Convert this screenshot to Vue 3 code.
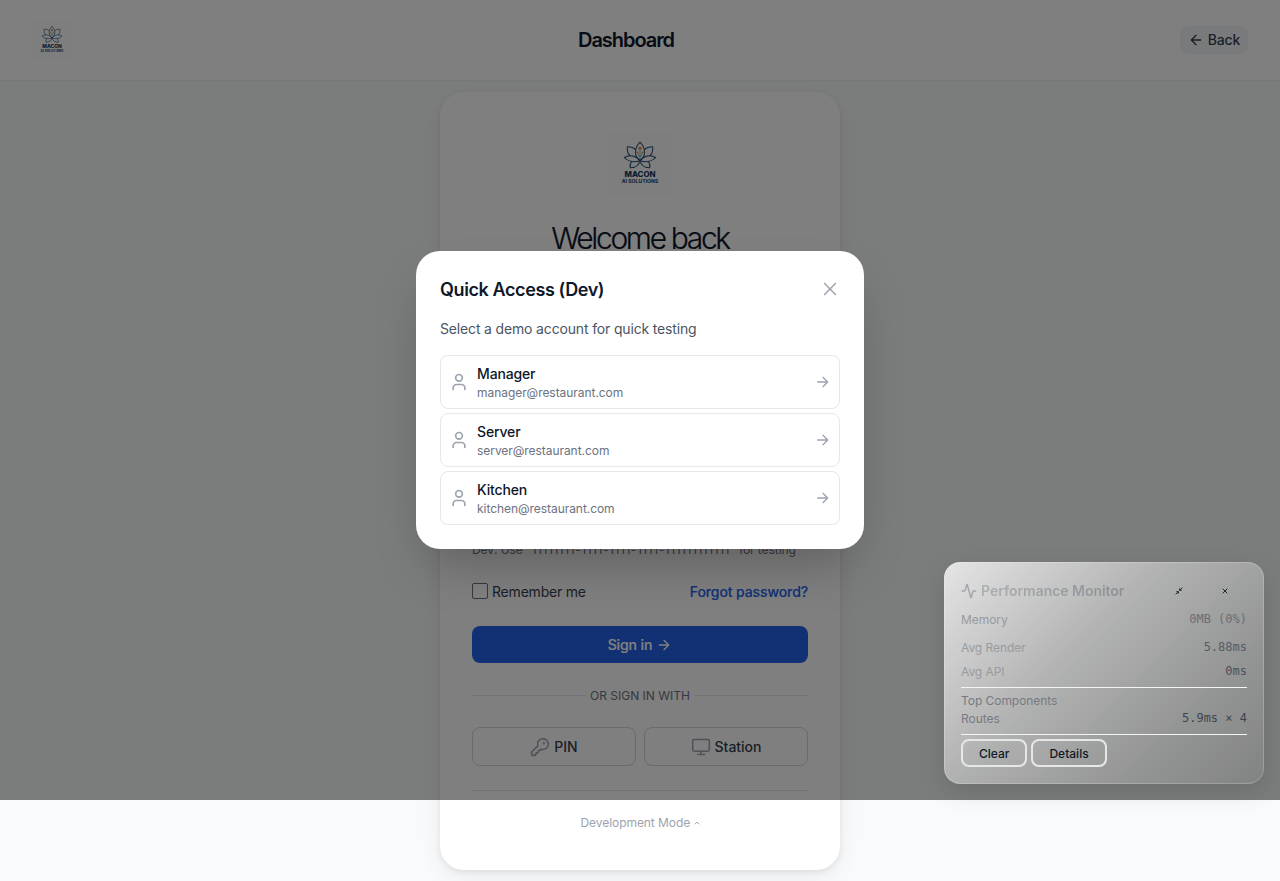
<script setup>
const accounts = [
  { name: 'Manager', email: 'manager@restaurant.com' },
  { name: 'Server', email: 'server@restaurant.com' },
  { name: 'Kitchen', email: 'kitchen@restaurant.com' },
]
const petals = [
  'M32 10.200C28.500 13.500 27.500 17.500 27.500 20C27.500 24 29.500 27 32 28.500C34.500 27 36.500 24 36.500 20C36.500 17.500 35.500 13.500 32 10.200Z',
  'M27.600 17.500C25.500 15.500 22.500 14.500 19.300 14.700C19 18.500 20 22 22.300 24M36.400 17.500C38.500 15.500 41.500 14.500 44.700 14.700C45 18.500 44 22 41.700 24',
  'M32 28.500C28 23.500 21.500 22.500 16.300 25.500C20 29.800 27 31 32 28.500C36 23.500 42.500 22.500 47.700 25.500C44 29.800 37 31 32 28.500Z',
  'M23.800 29.500C22 31.300 21.800 33.500 22.300 35.700C27 35.800 31 33.500 32 28.500C33 33.500 37 35.800 41.700 35.700C42.200 33.500 42 31.300 40.200 29.500',
]
</script>

<template>
  <div class="page">
    <header class="topbar">
      <div class="side">
        <svg class="logo small" viewBox="0 0 64 64">
          <g class="petals"><path v-for="d in petals" :key="d" :d="d" /></g>
          <path class="stem" d="M32 18V27M29.500 21.500L32 25L34.500 21.500" />
          <circle class="bud" cx="32" cy="16.200" r="1.700" /><circle class="bud" cx="29.600" cy="20.500" r="1" /><circle class="bud" cx="34.400" cy="20.500" r="1" />
          <text x="32" y="45" class="brand" textLength="31" lengthAdjust="spacingAndGlyphs">MACON</text>
          <text x="32" y="51" class="tag" textLength="36.500" lengthAdjust="spacingAndGlyphs">AI SOLUTIONS</text>
        </svg>
      </div>
      <h1>Dashboard</h1>
      <div class="side end">
        <button class="back">
          <svg class="ico" viewBox="0 0 24 24" width="16" height="16"><path d="M12 19l-7-7 7-7M19 12H5" /></svg>
          <span>Back</span>
        </button>
      </div>
    </header>

    <main>
      <section class="card">
        <svg class="logo" viewBox="0 0 64 64">
          <g class="petals"><path v-for="d in petals" :key="d" :d="d" /></g>
          <path class="stem" d="M32 18V27M29.500 21.500L32 25L34.500 21.500" />
          <circle class="bud" cx="32" cy="16.200" r="1.700" /><circle class="bud" cx="29.600" cy="20.500" r="1" /><circle class="bud" cx="34.400" cy="20.500" r="1" />
          <text x="32" y="45" class="brand" textLength="31" lengthAdjust="spacingAndGlyphs">MACON</text>
          <text x="32" y="51" class="tag" textLength="36.500" lengthAdjust="spacingAndGlyphs">AI SOLUTIONS</text>
        </svg>
        <h2>Welcome back</h2>
        <p class="hint">Dev: Use "<span class="digits">11111111-1111-1111-1111-111111111111</span>" for testing</p>
        <div class="options">
          <label><span class="box"></span><span class="label-text">Remember me</span></label>
          <a>Forgot password?</a>
        </div>
        <button class="signin">
          Sign in
          <svg class="ico" viewBox="0 0 24 24" width="16" height="16"><path d="M12 5l7 7-7 7M5 12h14" /></svg>
        </button>
        <div class="divider"><i></i><span>OR SIGN IN WITH</span><i></i></div>
        <div class="alts">
          <button>
            <svg class="ico" viewBox="0 0 24 24" width="20" height="20"><path d="M2.600 17.400A2 2 0 0 0 2 18.800V21a1 1 0 0 0 1 1h3a1 1 0 0 0 1-1v-1a1 1 0 0 1 1-1h1a1 1 0 0 0 1-1v-1a1 1 0 0 1 1-1h.2a2 2 0 0 0 1.400-.6l.8-.8a6.500 6.500 0 1 0-4-4z" /><circle cx="16.500" cy="7.500" r=".5" /></svg>
            PIN
          </button>
          <button>
            <svg class="ico" viewBox="0 0 24 24" width="20" height="20"><rect x="2" y="3" width="20" height="14" rx="2" /><path d="M8 21h8M12 17v4" /></svg>
            Station
          </button>
        </div>
        <div class="rule"></div>
        <div class="devmode">Development Mode <svg class="caret" viewBox="0 0 6 4" width="6" height="4"><path d="M.8 3.300L3 1.100l2.200 2.200" /></svg></div>
      </section>
    </main>

    <div class="overlay">
      <div class="modal">
        <div class="modal-head">
          <h3>Quick Access (Dev)</h3>
          <svg class="ico" viewBox="0 0 24 24" width="20" height="20"><path d="M18.500 5.500l-13 13M5.500 5.500l13 13" /></svg>
        </div>
        <p>Select a demo account for quick testing</p>
        <div class="accounts">
          <div v-for="a in accounts" :key="a.name" class="account">
            <svg class="ico" viewBox="0 0 24 24" width="20" height="20"><path d="M19 21v-2a4 4 0 0 0-4-4H9a4 4 0 0 0-4 4v2" /><circle cx="12" cy="7" r="4" /></svg>
            <div class="who"><b>{{ a.name }}</b><span>{{ a.email }}</span></div>
            <svg class="ico" viewBox="0 0 24 24" width="16" height="16"><path d="M12 5l7 7-7 7M4 12h15" /></svg>
          </div>
        </div>
      </div>
    </div>

    <aside class="perf">
      <div class="perf-head">
        <svg class="ico" viewBox="0 0 24 24" width="16" height="16"><path d="M22 12h-2.480a2 2 0 0 0-1.930 1.460l-2.350 8.360a.25.25 0 0 1-.48 0L9.240 2.180a.25.25 0 0 0-.48 0l-2.350 8.360A2 2 0 0 1 4.490 12H2" /></svg>
        <strong>Performance Monitor</strong>
        <svg class="mini shrink" viewBox="0 0 24 24" width="8" height="8"><path d="M4 14h6v6M20 10h-6V4M14 10l8-8M2 22l8-8" /></svg>
        <svg class="mini close" viewBox="0 0 24 24" width="8" height="8"><path d="M19 5L5 19M5 5l14 14" /></svg>
      </div>
      <div class="row first"><span>Memory</span><code>0MB (0%)</code></div>
      <div class="row second"><span>Avg Render</span><code>5.88ms</code></div>
      <div class="row third"><span>Avg API</span><code>0ms</code></div>
      <div class="line"></div>
      <div class="row top"><span>Top Components</span></div>
      <div class="row last"><span>Routes</span><code>5.9ms × 4</code></div>
      <div class="line"></div>
      <div class="acts"><button>Clear</button><button>Details</button></div>
    </aside>
  </div>
</template>

<style>
body { background: #f9fafb; }
</style>

<style scoped>
.page { position: relative; height: 881px; overflow: hidden; font-family: Inter, "Liberation Sans", sans-serif; color: #0f172a; background: linear-gradient(#f7fbf8 0 800px, #f9fafc 800px); }
.page * { box-sizing: border-box; }
h1, h2, h3, p { margin: 0; }
button { font: inherit; color: inherit; background: none; border: 0; padding: 0; display: flex; align-items: center; justify-content: center; }
.ico { fill: none; stroke: currentColor; stroke-width: 2; stroke-linecap: round; stroke-linejoin: round; flex: none; }
.topbar { height: 80px; padding: 0 32px; display: flex; align-items: center; justify-content: space-between; background: #fff; box-shadow: 0 1px 2px rgba(0,0,0,.06); }
.side { width: 40px; display: flex; }
.end { width: 68px; justify-content: flex-end; }
h1 { font-size: 20px; line-height: 28px; font-weight: 600; letter-spacing: -1.050px; }
.back { width: 68px; height: 28px; border-radius: 8px; background: #f3f4f6; font-size: 14px; line-height: 20px; font-weight: 500; color: #374151; gap: 4px; letter-spacing: -.1px; }
.back span { padding-bottom: 1px; }
.logo { display: block; width: 64px; height: 64px; background: #fdfdfd; }
.logo.small { width: 40px; height: 40px; }
.petals path { fill: none; stroke: #294b70; stroke-width: 1.050; stroke-linejoin: round; }
.stem { fill: none; stroke: #58aaa4; stroke-width: .8; }
.bud { fill: #f08a4b; }
.brand { font: 800 7px Inter, sans-serif; text-anchor: middle; fill: #163a5f; }
.tag { font: 700 4.600px Inter, sans-serif; text-anchor: middle; fill: #163a5f; }
main { display: flex; justify-content: center; padding-top: 12px; }
.card { width: 400px; height: 778px; border-radius: 24px; background: #fff; padding: 40px 32px 0; box-shadow: 0 8px 24px rgba(0,0,0,.06), 0 2px 6px rgba(0,0,0,.08); display: flex; flex-direction: column; }
.card .logo { align-self: center; }
h2 { margin-top: 23px; height: 38px; text-align: center; font-size: 30px; line-height: 38px; font-weight: 300; letter-spacing: -2.350px; -webkit-text-stroke: .2px currentColor; }
.hint { margin-top: 285px; font-size: 12px; line-height: 16px; color: #6b7280; white-space: nowrap; letter-spacing: -.06px; }
.digits { letter-spacing: .56px; }
.options { margin-top: 23px; height: 20px; display: flex; justify-content: space-between; align-items: center; font-size: 14px; color: #374151; letter-spacing: -.14px; }
.options label { display: flex; align-items: center; gap: 4px; letter-spacing: -.2px; }
.box { width: 16px; height: 16px; border: 1px solid #6b7280; border-radius: 2px; }
.options a { color: #2563eb; font-weight: 500; letter-spacing: -.1px; -webkit-text-stroke: .15px currentColor; }
.signin { margin-top: 25px; height: 37px; border-radius: 8px; background: #2563eb; color: #fff; font-size: 14px; font-weight: 500; gap: 4px; letter-spacing: -.1px; -webkit-text-stroke: .15px currentColor; }
.divider { margin-top: 24px; height: 16px; display: flex; align-items: center; gap: 4px; font-size: 12px; color: #6b7280; }
.divider i { flex: 1; height: 1px; background: #e5e7eb; }
.alts { display: flex; gap: 8px; margin-top: 24px; }
.alts button { flex: 1; height: 39px; border: 1px solid #d1d5db; border-radius: 8px; font-size: 14px; font-weight: 500; color: #374151; gap: 4px; }
.alts .ico { color: #9ca3af; stroke-width: 1.900; }
.rule { margin-top: 24px; height: 1px; background: #e5e7eb; }
.devmode { margin-top: 24px; font-size: 12px; line-height: 16px; color: #9ca3af; text-align: center; letter-spacing: -.06px; }
.caret { fill: none; stroke: currentColor; vertical-align: 2px; }
.overlay { position: absolute; inset: 0 0 auto; height: 800px; background: rgba(0,0,0,.5); display: flex; align-items: center; justify-content: center; }
.modal { width: 448px; height: 298px; border-radius: 24px; background: #fff; padding: 24px; box-shadow: 0 25px 50px -12px rgba(0,0,0,.25); }
.modal-head { height: 28px; display: flex; align-items: center; justify-content: space-between; }
.modal-head .ico { color: #9ca3af; stroke-width: 1.800; }
h3 { font-size: 18px; line-height: 28px; font-weight: 600; letter-spacing: -.39px; padding-top: 2px; }
.modal p { margin-top: 16px; font-size: 14px; line-height: 20px; color: #4b5563; letter-spacing: -.16px; }
.accounts { margin-top: 16px; display: grid; gap: 4px; }
.account { height: 54px; border: 1px solid #e5e7eb; border-radius: 8px; padding: 0 8px; display: flex; align-items: center; }
.account .ico { color: #9ca3af; }
.who { flex: 1; margin-left: 8px; display: flex; flex-direction: column; padding-top: 1px; }
.who b { font-size: 14px; line-height: 20px; font-weight: 500; letter-spacing: -.15px; }
.who span { font-size: 12px; line-height: 17px; color: #6b7280; letter-spacing: -.05px; }
.perf { position: absolute; left: 944px; top: 562px; width: 320px; height: 222px; padding: 16px; border: 1px solid rgba(255,255,255,.2); border-radius: 16px; background: linear-gradient(135deg, rgba(255,255,255,.8), rgba(255,255,255,.42) 40%, rgba(255,255,255,.2) 72%, rgba(255,255,255,.05)) border-box; box-shadow: 0 8px 24px rgba(0,0,0,.12); color: #6b7280; }
.perf-head { height: 24px; display: flex; align-items: center; font-size: 14px; color: #a1a4aa; }
.perf-head strong { font-weight: 600; margin-left: 4px; flex: 1; letter-spacing: -.04px; padding-bottom: 1px; background: linear-gradient(90deg, #acaeb2, #8b8e94 145px); background-clip: text; color: transparent; }
.mini { fill: none; stroke: #1f2937; stroke-width: 3; }
.shrink { margin-right: 38px; }
.close { margin-right: 18px; }
.row { display: flex; justify-content: space-between; font-size: 12px; line-height: 16px; height: 16px; letter-spacing: -.05px; }
.row code { font: 12px/16px "DejaVu Sans Mono", monospace; letter-spacing: 0; color: #4b4f5c; }
.row span { color: #8b8e95; }
.first { margin-top: 9px; }
.first span, .second span, .third span { color: #989ba0; }
.first code { color: #696d77; line-height: 14px; }
.third code { line-height: 14px; }
.second code, .last code { line-height: 15px; }
.second code { color: #565a66; }
.second { margin-top: 12px; }
.third { margin-top: 8px; margin-bottom: 7px; }
.line { height: 1px; background: #f3f4f6; }
.top { margin-top: 5px; }
.top span, .last span { color: #777a83; }
.last { margin: 2px 0 7px; }
.last code { color: #41444f; }
.acts { margin-top: 4px; display: flex; gap: 4px; }
.acts button { height: 28px; border: 2px solid #e5e7eb; border-radius: 8px; padding: 0 16px; font-size: 12px; font-weight: 500; color: #111827; }
</style>
